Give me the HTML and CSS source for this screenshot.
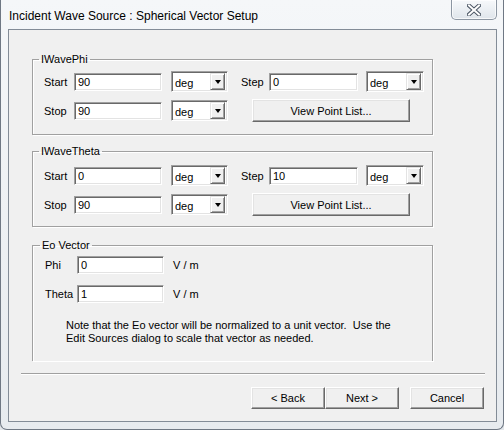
FILE: index.html
```html
<!DOCTYPE html>
<html lang="en">
<head>
  <meta charset="UTF-8" />
  <title>Incident Wave Source : Spherical Vector Setup</title>
  <link rel="stylesheet" href="styles.css">
</head>
<body>
  <div class="window">
    <div class="titlebar">
      <span class="title">Incident Wave Source : Spherical Vector Setup</span>
      <div class="close-btn">
        <svg width="14" height="12" viewBox="0 0 14 12">
          <path d="M2 1.5 L12 10.5 M12 1.5 L2 10.5" stroke="#4a5563" stroke-width="4" stroke-linecap="square" fill="none"/>
          <path d="M2 1.5 L12 10.5 M12 1.5 L2 10.5" stroke="#ffffff" stroke-width="2" stroke-linecap="square" fill="none"/>
        </svg>
      </div>
    </div>

    <div class="client">
      <fieldset class="group group-phi">
        <legend>IWavePhi</legend>
        <div class="row">
          <label class="lbl">Start</label>
          <input class="field" type="text" value="90">
          <div class="combo"><span>deg</span><i class="drop"></i></div>
          <label class="lbl lbl-step">Step</label>
          <input class="field field-step" type="text" value="0">
          <div class="combo combo-step"><span>deg</span><i class="drop"></i></div>
        </div>
        <div class="row">
          <label class="lbl">Stop</label>
          <input class="field" type="text" value="90">
          <div class="combo"><span>deg</span><i class="drop"></i></div>
          <button class="btn btn-list">View Point List...</button>
        </div>
      </fieldset>

      <fieldset class="group group-theta">
        <legend>IWaveTheta</legend>
        <div class="row">
          <label class="lbl">Start</label>
          <input class="field" type="text" value="0">
          <div class="combo"><span>deg</span><i class="drop"></i></div>
          <label class="lbl lbl-step">Step</label>
          <input class="field field-step" type="text" value="10">
          <div class="combo combo-step"><span>deg</span><i class="drop"></i></div>
        </div>
        <div class="row">
          <label class="lbl">Stop</label>
          <input class="field" type="text" value="90">
          <div class="combo"><span>deg</span><i class="drop"></i></div>
          <button class="btn btn-list">View Point List...</button>
        </div>
      </fieldset>

      <fieldset class="group group-eo">
        <legend>Eo Vector</legend>
        <div class="row row-eo">
          <label class="lbl lbl-eo">Phi</label>
          <input class="field field-eo" type="text" value="0">
          <span class="unit">V / m</span>
        </div>
        <div class="row row-eo">
          <label class="lbl lbl-eo">Theta</label>
          <input class="field field-eo" type="text" value="1">
          <span class="unit">V / m</span>
        </div>
        <p class="note">Note that the Eo vector will be normalized to a unit vector.&nbsp; Use the<br>Edit Sources dialog to scale that vector as needed.</p>
      </fieldset>

      <div class="separator"></div>

      <div class="actions">
        <button class="btn btn-nav">&lt; Back</button>
        <button class="btn btn-nav">Next &gt;</button>
        <button class="btn btn-nav btn-cancel">Cancel</button>
      </div>
    </div>
  </div>
</body>
</html>
```

FILE: styles.css
```css
* { box-sizing: border-box; }
body {
  margin: 0;
  background: #e2e6ea;
  font-family: "Liberation Sans", Arial, sans-serif;
  font-size: 11px;
  color: #000;
}
.window {
  position: relative;
  width: 504px;
  height: 430px;
  padding: 0 6px 7px 7px;
  background: linear-gradient(#f5f7f9, #e7ebef);
  border: 1px solid #6f7884;
  border-top: none;
  border-radius: 0 0 7px 7px;
}
.titlebar {
  height: 29px;
  display: flex;
  align-items: center;
  padding: 3px 0 0 1px;
}
.title {
  font-size: 12px;
  color: #000;
}
.close-btn {
  position: absolute;
  top: 0;
  right: 6px;
  width: 46px;
  height: 20px;
  border: 1px solid #8c96a2;
  border-top: none;
  border-radius: 0 0 5px 5px;
  background: linear-gradient(#f7f9fb, #dfe5eb);
  display: flex;
  align-items: center;
  justify-content: center;
  box-shadow: inset 0 0 0 1px rgba(255,255,255,0.7);
}
.client {
  height: 393px;
  background: #f0f0f0;
  border: 1px solid #838c97;
  padding-top: 23px;
}

/* group boxes */
.group {
  margin: 0 0 0 23px;
  width: 401px;
  border: 1px solid #a0a0a0;
  padding: 5px 0 13px 11px;
  box-shadow: 1px 1px 0 #fff, inset 1px 1px 0 #fff;
}
.group legend {
  padding: 0 2px;
  margin-left: -5px;
  line-height: 13px;
}
.group-theta {
  margin-top: 10px;
  padding-top: 7px;
  padding-bottom: 11px;
}
.group-eo {
  margin-top: 12px;
  padding: 4px 0 0 12px;
  height: 122px;
  border-bottom: none;
}
.row {
  display: flex;
  align-items: center;
  height: 21px;
}
.row + .row { margin-top: 8px; }

.lbl { width: 30px; }
.lbl-step { width: 28px; margin-left: 13px; }
.lbl-eo { width: 32px; }

.field {
  width: 88px;
  height: 18px;
  border: 1px solid;
  border-color: #a0a0a0 #fff #fff #a0a0a0;
  box-shadow: inset 1px 1px 0 #696969, inset -1px -1px 0 #e3e3e3;
  padding: 0 0 0 3px;
  font: inherit;
  background: #fff;
  outline: none;
}
.field-step { width: 89px; }
.field-eo { width: 87px; }

.combo {
  width: 57px;
  height: 21px;
  margin-left: 9px;
  border: 1px solid;
  border-color: #a0a0a0 #fff #fff #a0a0a0;
  box-shadow: inset 1px 1px 0 #696969, inset -1px -1px 0 #e3e3e3;
  background: #fff;
  display: flex;
  align-items: center;
  justify-content: space-between;
  padding: 2px 2px 2px 3px;
}
.combo span { padding-top: 3px; }
.combo-step { width: 58px; margin-left: 8px; }
.drop {
  width: 15px;
  height: 17px;
  background: #f0f0f0;
  border: 1px solid;
  border-color: #e3e3e3 #696969 #696969 #e3e3e3;
  box-shadow: inset 1px 1px 0 #fff, inset -1px -1px 0 #a0a0a0;
  display: flex;
  align-items: center;
  justify-content: center;
}
.drop::after {
  content: "";
  border-left: 3.5px solid transparent;
  border-right: 3.5px solid transparent;
  border-top: 4px solid #000;
}

.btn {
  font: inherit;
  color: #000;
  background: #f0f0f0;
  border: 1px solid;
  border-color: #fff #696969 #696969 #fff;
  box-shadow: inset -1px -1px 0 #a0a0a0, inset 1px 1px 0 #e3e3e3;
  padding: 0;
}
.btn-list {
  width: 158px;
  height: 23px;
  margin-left: 24px;
}

.row-eo { height: 18px; }
.row-eo + .row-eo { margin-top: 11px; }
.unit { margin-left: 9px; }
.note {
  margin: 16px 0 0 21px;
  line-height: 13px;
}

.separator {
  margin: 12px 0 0 12px;
  width: 464px;
  border-top: 1px solid #a0a0a0;
  border-bottom: 1px solid #fff;
}
.actions {
  display: flex;
  margin: 12px 0 0 242px;
}
.btn-nav {
  width: 74px;
  height: 22px;
}
.btn-cancel { margin-left: 11px; }
```
